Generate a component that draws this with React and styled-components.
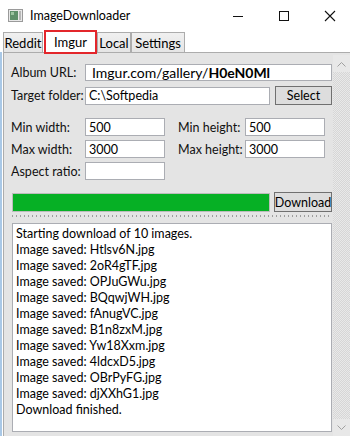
import React from 'react';
import styled, { createGlobalStyle } from 'styled-components';

const GlobalStyle = createGlobalStyle`
  html, body {
    margin: 0;
    padding: 0;
    background: #ffffff;
  }
  body {
    font-family: Lato, "Noto Sans", sans-serif;
    color: #000000;
  }
`;

const logLines = [
  'Starting download of 10 images.',
  'Image saved: Htlsv6N.jpg',
  'Image saved: 2oR4gTF.jpg',
  'Image saved: OPJuGWu.jpg',
  'Image saved: BQqwjWH.jpg',
  'Image saved: fAnugVC.jpg',
  'Image saved: B1n8zxM.jpg',
  'Image saved: Yw18Xxm.jpg',
  'Image saved: 4ldcxD5.jpg',
  'Image saved: OBrPyFG.jpg',
  'Image saved: djXXhG1.jpg',
  'Download finished.',
];

function AppIcon() {
  return (
    <svg width="15" height="13" viewBox="0 0 15 13">
      <rect x="0.5" y="0.5" width="14" height="12" fill="#e8e8e8" stroke="#9a9a9a" />
      <rect x="2" y="2" width="8" height="9" fill="#5f8f6a" />
      <rect x="3" y="3" width="3" height="3" fill="#9cc4a0" />
      <rect x="11" y="2" width="2" height="9" fill="#b8b8b8" />
    </svg>
  );
}

function WindowControls() {
  return (
    <Controls>
      <svg width="12" height="12" viewBox="0 0 12 12">
        <line x1="1" y1="6.5" x2="11" y2="6.5" stroke="#111" strokeWidth="1" />
      </svg>
      <svg width="12" height="12" viewBox="0 0 12 12">
        <rect x="1.5" y="1.5" width="9" height="9" fill="none" stroke="#111" strokeWidth="1" />
      </svg>
      <svg width="12" height="12" viewBox="0 0 12 12">
        <path d="M1 1 L11 11 M11 1 L1 11" stroke="#111" strokeWidth="1.1" />
      </svg>
    </Controls>
  );
}

function Chevron({ down }) {
  return (
    <svg width="9" height="6" viewBox="0 0 9 6">
      <path
        d={down ? 'M0.5 0.5 L4.5 4.5 L8.5 0.5' : 'M0.5 5.5 L4.5 1.5 L8.5 5.5'}
        fill="none"
        stroke="#a0a0a0"
        strokeWidth="1"
      />
    </svg>
  );
}

export default function App() {
  return (
    <Window>
      <GlobalStyle />
      <TitleBar>
        <TitleLeft>
          <AppIcon />
          <Title>ImageDownloader</Title>
        </TitleLeft>
        <WindowControls />
      </TitleBar>

      <TabStrip>
        <Tab $w={40}>Reddit</Tab>
        <Tab $w={53} $active>Imgur</Tab>
        <Tab $w={34}>Local</Tab>
        <Tab $w={54}>Settings</Tab>
      </TabStrip>

      <Body>
        <Panel>
          <Content>
            <Row $top={11}>
              <Label>Album URL:</Label>
              <UrlBox>
                Imgur.com/gallery/<b>H0eN0Ml</b>
              </UrlBox>
            </Row>
            <Row $top={5}>
              <Label>Target folder:</Label>
              <TextBox $h={18}>C:\Softpedia</TextBox>
              <Button $w={57} $h={19}>Select</Button>
            </Row>

            <Pair $top={13}>
              <Row>
                <Label>Min width:</Label>
                <TextBox $w={80}>500</TextBox>
              </Row>
              <Row>
                <SmallLabel>Min height:</SmallLabel>
                <TextBox $w={80}>500</TextBox>
              </Row>
            </Pair>
            <Pair $top={4}>
              <Row>
                <Label>Max width:</Label>
                <TextBox $w={80}>3000</TextBox>
              </Row>
              <Row>
                <SmallLabel>Max height:</SmallLabel>
                <TextBox $w={80}>3000</TextBox>
              </Row>
            </Pair>
            <Row $top={4}>
              <Label>Aspect ratio:</Label>
              <TextBox $w={80} />
            </Row>

            <ProgressRow>
              <Progress>
                <ProgressFill style={{ width: '100%' }} />
              </Progress>
              <Button $w={58} $h={20}>Download</Button>
            </ProgressRow>
            <Splitter />
            <Log>
              {logLines.map((line) => (
                <LogLine key={line}>{line}</LogLine>
              ))}
            </Log>
          </Content>
          <ScrollBar>
            <ScrollButton>
              <Chevron />
            </ScrollButton>
            <ScrollTrack />
            <ScrollButton>
              <Chevron down />
            </ScrollButton>
          </ScrollBar>
        </Panel>
      </Body>
    </Window>
  );
}

const Window = styled.div`
  width: 350px;
  height: 436px;
  overflow: hidden;
  background: #ffffff;
  display: flex;
  flex-direction: column;
`;

const TitleBar = styled.div`
  flex: none;
  height: 31px;
  display: flex;
  align-items: center;
  justify-content: space-between;
  padding-left: 8px;
  box-sizing: border-box;
`;

const TitleLeft = styled.div`
  display: flex;
  align-items: center;
  gap: 7px;
`;

const Title = styled.span`
  font-size: 12.5px;
  color: #000;
`;

const Controls = styled.div`
  display: flex;
  align-items: center;
  gap: 34px;
  padding-right: 14px;
  margin-left: auto;
`;

const TabStrip = styled.div`
  flex: none;
  height: 21px;
  display: flex;
  align-items: flex-end;
  padding-left: 3px;
  position: relative;
  z-index: 2;
`;

const Tab = styled.div`
  width: ${(p) => p.$w}px;
  height: ${(p) => (p.$active ? 24 : 20)}px;
  box-sizing: border-box;
  display: flex;
  align-items: center;
  justify-content: center;
  font-size: 13px;
  background: ${(p) => (p.$active ? '#ffffff' : 'linear-gradient(#f0f0f0, #e5e5e5)')};
  border: ${(p) => (p.$active ? '2px solid #e3262b' : '1px solid #acacac')};
  border-bottom: ${(p) => (p.$active ? '2px solid #e3262b' : 'none')};
  margin-bottom: ${(p) => (p.$active ? '-2px' : '0')};
  margin-left: ${(p) => (p.$active ? '1px' : '0')};
  padding-top: ${(p) => (p.$active ? '0' : '1px')};
`;

const Body = styled.div`
  flex: 1;
  min-height: 0;
  display: flex;
  border-left: 2px solid #a9c8e6;
  padding-left: 1px;
`;

const Panel = styled.div`
  flex: 1;
  display: flex;
  background: #e4e4e4;
  border-top: 1px solid #acacac;
  border-left: 1px solid #acacac;
`;

const Content = styled.div`
  width: 321px;
  padding-left: 7px;
  display: flex;
  flex-direction: column;
  font-size: 12.5px;
`;

const Row = styled.div`
  display: flex;
  align-items: center;
  margin-top: ${(p) => p.$top || 0}px;
  gap: 5px;
`;

const Pair = styled.div`
  display: flex;
  gap: 13px;
  margin-top: ${(p) => p.$top}px;
`;

const Label = styled.span`
  width: 74px;
  flex: none;
  font-size: 12.5px;
  color: #111;
  margin-right: -5px;
  white-space: nowrap;
`;

const SmallLabel = styled(Label)`
  width: 67px;
`;

const TextBox = styled.div`
  ${(p) => (p.$w ? `width: ${p.$w}px;` : 'flex: 1;')}
  height: ${(p) => p.$h || 18}px;
  box-sizing: border-box;
  background: #ffffff;
  border: 1px solid #abadb3;
  padding-left: 3px;
  display: flex;
  align-items: center;
  font-size: 12.5px;
  color: #000;
`;

const UrlBox = styled(TextBox)`
  height: 17px;
  font-size: 14px;
  padding-left: 6px;
  white-space: nowrap;

  b {
    font-weight: 700;
  }
`;

const Button = styled.div`
  width: ${(p) => p.$w}px;
  height: ${(p) => p.$h}px;
  box-sizing: border-box;
  flex: none;
  background: #dddddd;
  border: 1px solid #707070;
  display: flex;
  align-items: center;
  justify-content: center;
  font-size: 12.5px;
`;

const ProgressRow = styled.div`
  display: flex;
  align-items: center;
  gap: 4px;
  margin-top: 12px;
  margin-left: 1px;
`;

const Progress = styled.div`
  flex: 1;
  height: 19px;
  box-sizing: border-box;
  border: 1px solid #bcbcbc;
  background: #e6e6e6;
`;

const ProgressFill = styled.div`
  height: 100%;
  background: #06b025;
`;

const Splitter = styled.div`
  height: 2px;
  margin: 3px 0 0 1px;
  background: repeating-linear-gradient(to right, #8c8c8c 0 1.5px, transparent 1.5px 4px);
  opacity: 0.8;
`;

const Log = styled.div`
  margin-top: 6px;
  margin-left: 1px;
  height: 209px;
  box-sizing: border-box;
  background: #ffffff;
  border: 1px solid #abadb3;
  padding: 2px 3px;
`;

const LogLine = styled.div`
  font-size: 12.5px;
  line-height: 16px;
  height: 16px;
  color: #000;
  white-space: nowrap;
`;

const ScrollBar = styled.div`
  margin-left: auto;
  width: 17px;
  display: flex;
  flex-direction: column;
  padding-top: 2px;
`;

const ScrollButton = styled.div`
  flex: none;
  height: 17px;
  display: flex;
  align-items: center;
  justify-content: center;
  background: #e8e8e8;
`;

const ScrollTrack = styled.div`
  flex: 1;
  background-color: #dcdcdc;
  background-image: repeating-conic-gradient(#e9e9e9 0 25%, #d6d6d6 0 50%);
  background-size: 2px 2px;
`;
